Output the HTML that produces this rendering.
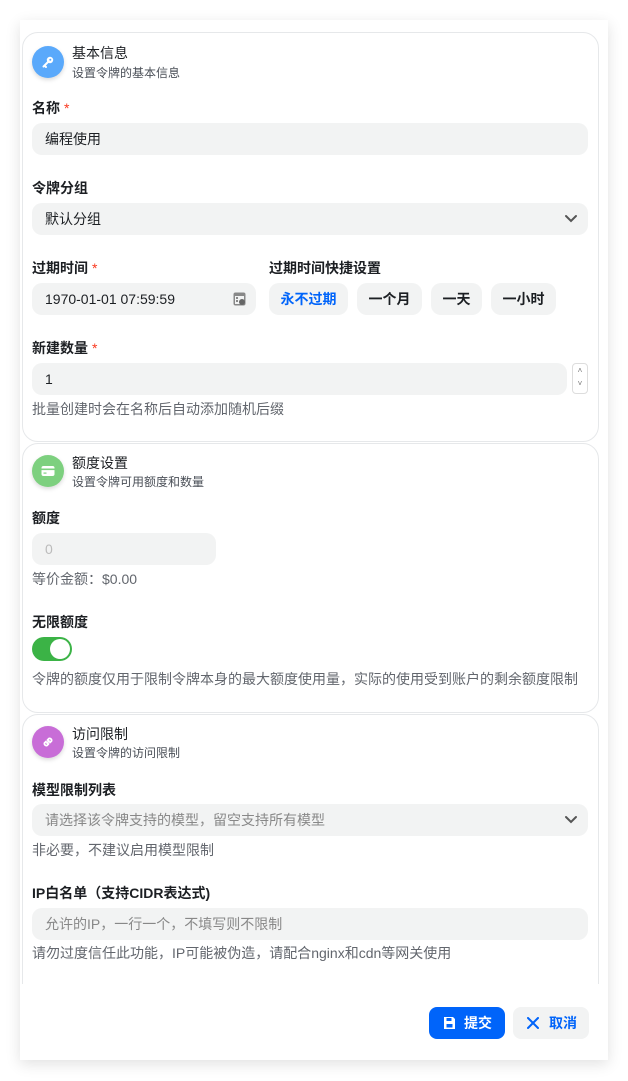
<!DOCTYPE html>
<html><head><meta charset="utf-8"><style>
*{box-sizing:border-box;margin:0;padding:0}
body{width:628px;height:1081px;background:#fff;font-family:"Liberation Sans","Noto Sans CJK SC",sans-serif;color:#1c1f23;position:relative;overflow:hidden}
.panel{position:absolute;left:20px;top:20px;width:588px;height:1040px;background:#fff;box-shadow:0 4px 14px rgba(0,0,0,.12)}
.card{position:absolute;left:22px;width:577px;border:1px solid #e6e8ea;border-radius:16px;background:#fff}
.abs{position:absolute}
.ic{position:absolute;left:32px;width:32px;height:32px;border-radius:50%;box-shadow:0 2px 4px rgba(0,0,0,.15);display:flex;align-items:center;justify-content:center}
.t{position:absolute;left:72px;font-size:14px;color:#1c1f23}
.s{position:absolute;left:72px;font-size:12px;color:#4a4f57}
.lb{position:absolute;left:32px;font-size:14px;font-weight:bold;line-height:18px}
.lb i{color:#f93920;font-style:normal;font-weight:normal;margin-left:4px}
.in{position:absolute;height:32px;background:#f2f3f3;border-radius:10px;font-size:14px;padding-left:13px;line-height:32px}
.h{position:absolute;left:32px;font-size:14px;color:#62666d;line-height:18px}
.btn{position:absolute;top:283px;height:32px;background:#f2f3f3;border-radius:10px;font-size:14px;font-weight:bold;line-height:32px;text-align:center;color:#1c1f23}
.chev{position:absolute;right:10px;top:10px}
</style></head><body>
<div class="panel"></div>
<div class="card" style="top:32px;height:410px"></div>
<div class="card" style="top:443px;height:270px"></div>
<div class="card" style="top:714px;height:300px"></div>
<div class="abs" style="left:20px;top:984px;width:588px;height:76px;background:#fff"></div>

<div class="ic" style="top:46px;background:#5aa9fb"><svg width="14" height="14" viewBox="0 0 14 14"><circle cx="9" cy="5" r="3.2" fill="#fff"/><circle cx="9.3" cy="4.7" r="1" fill="#5aa9fb"/><path d="M7 7 L2.5 11.5 M3.5 10.5 L5 12" stroke="#fff" stroke-width="2" stroke-linecap="round"/></svg></div>
<div class="t" style="top:43px">基本信息</div>
<div class="s" style="top:64px">设置令牌的基本信息</div>

<div class="lb" style="top:99px">名称<i>*</i></div>
<div class="in" style="left:32px;top:123px;width:556px">编程使用</div>
<div class="lb" style="top:179px">令牌分组</div>
<div class="in" style="left:32px;top:203px;width:556px">默认分组<svg class="chev" width="14" height="12" viewBox="0 0 14 12"><path d="M2 3 L7 8 L12 3" stroke="#555" stroke-width="2" fill="none" stroke-linecap="round"/></svg></div>
<div class="lb" style="top:259px">过期时间<i>*</i></div>
<div class="lb" style="top:259px;left:269px">过期时间快捷设置</div>
<div class="in" style="left:32px;top:283px;width:224px">1970-01-01 07:59:59<svg class="abs" style="right:10px;top:9px" width="13" height="14" viewBox="0 0 13 14"><rect x="0.5" y="0.5" width="12" height="13" rx="2" fill="#888"/><rect x="2" y="4" width="9" height="8" fill="#f2f3f3"/><circle cx="9" cy="10" r="3" fill="#666"/><rect x="3" y="5" width="2" height="2" fill="#888"/><rect x="3" y="8" width="2" height="2" fill="#888"/></svg></div>
<div class="btn" style="left:269px;width:79px;color:#0064fa">永不过期</div>
<div class="btn" style="left:357px;width:65px">一个月</div>
<div class="btn" style="left:431px;width:51px">一天</div>
<div class="btn" style="left:491px;width:65px">一小时</div>
<div class="lb" style="top:339px">新建数量<i>*</i></div>
<div class="in" style="left:32px;top:363px;width:535px">1</div>
<div class="abs" style="left:572px;top:363px;width:16px;height:31px;border:1px solid #ddd;border-radius:4px;font-size:8px;color:#777;text-align:center;line-height:13px">˄<br>˅</div>
<div class="h" style="top:400px">批量创建时会在名称后自动添加随机后缀</div>

<div class="ic" style="top:455px;background:#7dd07f"><svg width="14" height="12" viewBox="0 0 14 12"><rect x="0.5" y="1" width="13" height="10" rx="2" fill="#fff"/><rect x="0.5" y="3.5" width="13" height="1.6" fill="#7dd07f"/><rect x="2.5" y="7.5" width="3" height="1.2" fill="#7dd07f"/></svg></div>
<div class="t" style="top:453px">额度设置</div>
<div class="s" style="top:473px">设置令牌可用额度和数量</div>
<div class="lb" style="top:509px">额度</div>
<div class="in" style="left:32px;top:533px;width:184px;color:#bbb">0</div>
<div class="h" style="top:570px">等价金额：$0.00</div>
<div class="lb" style="top:613px">无限额度</div>
<div class="abs" style="left:32px;top:637px;width:40px;height:24px;border-radius:12px;background:#3bb346"><div class="abs" style="left:18px;top:2px;width:20px;height:20px;border-radius:50%;background:#fff"></div></div>
<div class="h" style="top:670px">令牌的额度仅用于限制令牌本身的最大额度使用量，实际的使用受到账户的剩余额度限制</div>

<div class="ic" style="top:726px;background:#c86dd7"><svg width="14" height="14" viewBox="0 0 14 14"><path d="M6 8 L8 6 M5 6.5 L3.5 8 A2 2 0 0 0 6 10.5 L7.5 9 M9 7.5 L10.5 6 A2 2 0 0 0 8 3.5 L6.5 5" stroke="#fff" stroke-width="1.8" fill="none" stroke-linecap="round"/></svg></div>
<div class="t" style="top:724px">访问限制</div>
<div class="s" style="top:744px">设置令牌的访问限制</div>
<div class="lb" style="top:781px">模型限制列表</div>
<div class="in" style="left:32px;top:804px;width:556px;color:#888">请选择该令牌支持的模型，留空支持所有模型<svg class="chev" width="14" height="12" viewBox="0 0 14 12"><path d="M2 3 L7 8 L12 3" stroke="#555" stroke-width="2" fill="none" stroke-linecap="round"/></svg></div>
<div class="h" style="top:841px">非必要，不建议启用模型限制</div>
<div class="lb" style="top:884px">IP白名单（支持CIDR表达式)</div>
<div class="in" style="left:32px;top:908px;width:556px;color:#888">允许的IP，一行一个，不填写则不限制</div>
<div class="h" style="top:944px">请勿过度信任此功能，IP可能被伪造，请配合nginx和cdn等网关使用</div>

<div class="abs" style="left:429px;top:1007px;width:76px;height:32px;background:#0064fa;border-radius:8px;color:#fff;font-size:14px;font-weight:bold;line-height:32px;padding-left:35px"><svg class="abs" style="left:14px;top:9px" width="13" height="14" viewBox="0 0 13 14"><path d="M1 1 H10 L12 3 V13 H1 Z" fill="#fff"/><rect x="3.5" y="2" width="5" height="3" fill="#0064fa"/><rect x="3.5" y="8" width="6" height="3.5" fill="#0064fa"/></svg>提交</div>
<div class="abs" style="left:513px;top:1007px;width:76px;height:32px;background:#f2f3f3;border-radius:8px;color:#0064fa;font-size:14px;font-weight:bold;line-height:32px;padding-left:36px"><svg class="abs" style="left:14px;top:10px" width="12" height="12" viewBox="0 0 12 12"><path d="M1 1 L11 11 M11 1 L1 11" stroke="#0064fa" stroke-width="2" stroke-linecap="round"/></svg>取消</div>
</body></html>
